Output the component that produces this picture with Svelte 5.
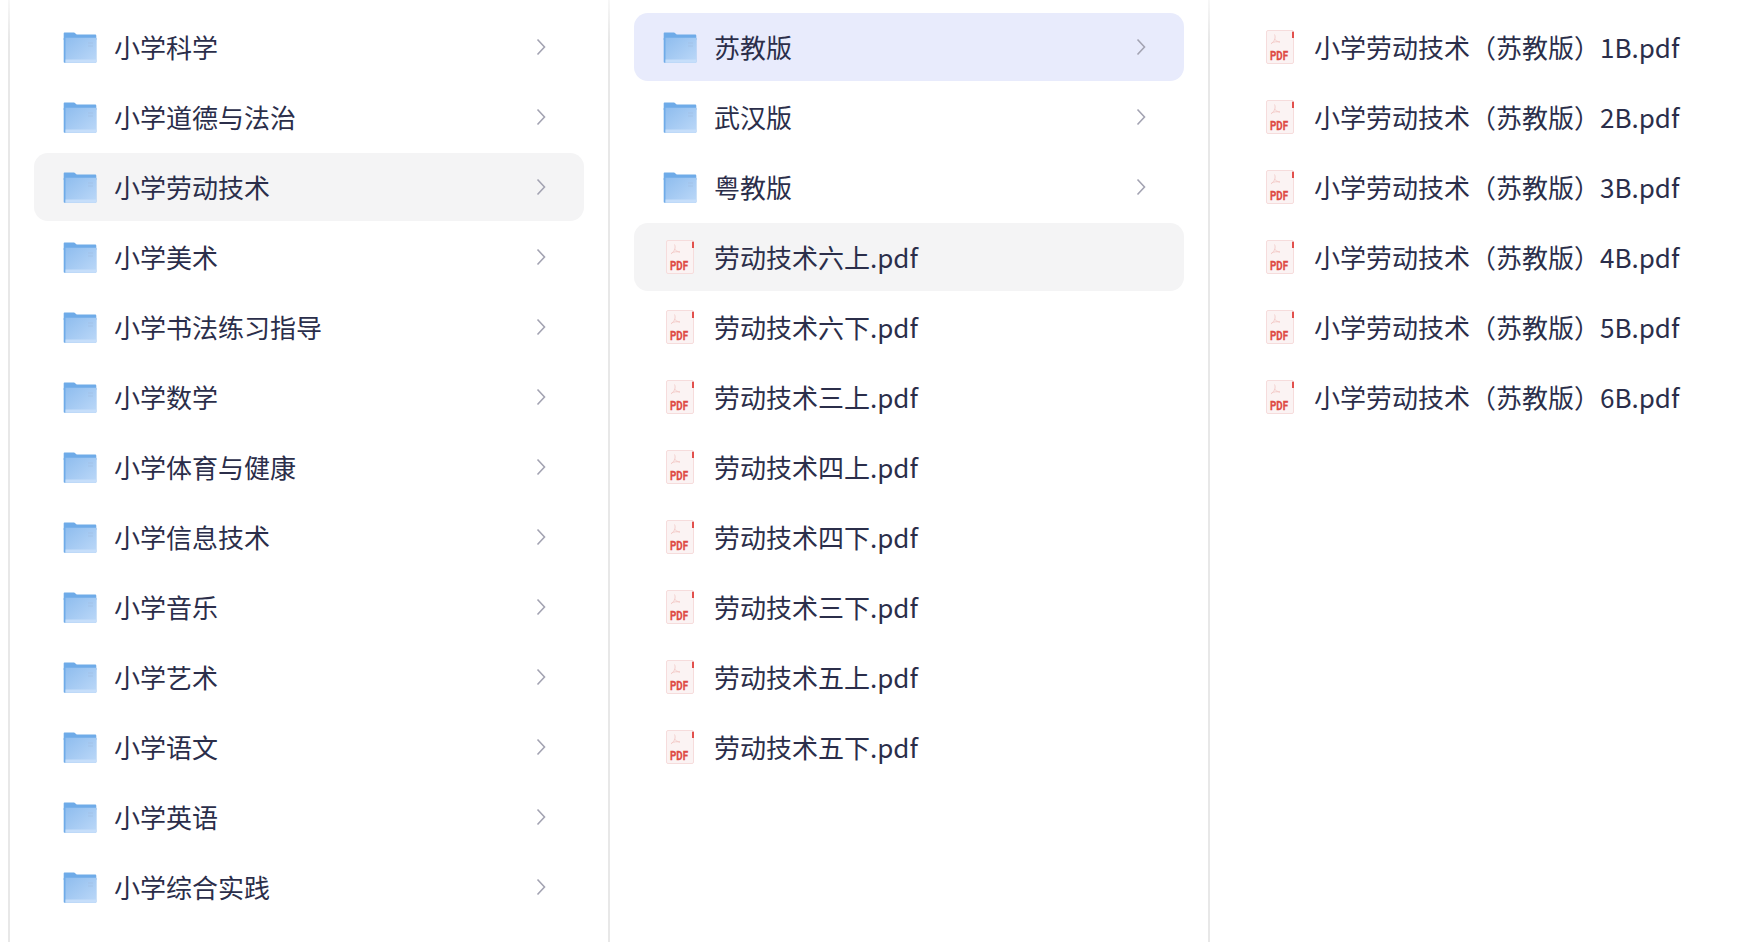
<script lang="ts">
	type Item = { name: string; kind: 'folder' | 'pdf'; state?: 'hover' | 'active' };

	const subjects = [
		'小学科学',
		'小学道德与法治',
		'小学劳动技术',
		'小学美术',
		'小学书法练习指导',
		'小学数学',
		'小学体育与健康',
		'小学信息技术',
		'小学音乐',
		'小学艺术',
		'小学语文',
		'小学英语',
		'小学综合实践'
	];
	const versions = ['苏教版', '武汉版', '粤教版'];
	const books = ['六上', '六下', '三上', '四上', '四下', '三下', '五上', '五下'];

	const columns: Item[][] = [
		subjects.map((name, i) => ({
			name,
			kind: 'folder' as const,
			state: i === 2 ? ('hover' as const) : undefined
		})),
		[
			...versions.map((name, i) => ({
				name,
				kind: 'folder' as const,
				state: i === 0 ? ('active' as const) : undefined
			})),
			...books.map((b, i) => ({
				name: `劳动技术${b}.pdf`,
				kind: 'pdf' as const,
				state: i === 0 ? ('hover' as const) : undefined
			}))
		],
		[1, 2, 3, 4, 5, 6].map((n) => ({
			name: `小学劳动技术（苏教版）${n}B.pdf`,
			kind: 'pdf' as const
		}))
	];
</script>

<div class="browser">
	{#each columns as items, c}
		<ul class="column">
			{#each items as item}
				<li class="row {item.state ?? ''}">
					{#if item.kind === 'folder'}
						<svg class="icon" viewBox="0 0 34 34" aria-hidden="true">
							<defs>
								<linearGradient id="folder-{c}-{item.name}" x1="0" y1="0" x2="1" y2="1">
									<stop offset="0" stop-color="#8fbdee" />
									<stop offset="1" stop-color="#bcd8f8" />
								</linearGradient>
							</defs>
							<path d="M.7 3.500c0-.6.4-1 1-1h9.500l2.500 2h18.300c.8 0 1.300.5 1.300 1.300V10H.7z" fill="#6fabe8" />
							<path d="M.7 8h32.600v23.700c0 .6-.4 1-1 1H1.700c-.6 0-1-.4-1-1z" fill="#6fabe8" />
							<path d="M2.500 7.800h30.800v23.900c0 .6-.4 1-1 1H2.500z" fill="url(#folder-{c}-{item.name})" />
							<path d="M2.500 29.500h30.800v2.200c0 .6-.4 1-1 1H2.500z" fill="#c6defa" />
							<path d="M25 13h5M25 16h5" stroke="#a2c0e4" stroke-width="0.8" />
						</svg>
					{:else}
						<svg class="icon" viewBox="0 0 34 34" aria-hidden="true">
							<rect x="3.500" y="0.500" width="27" height="33" rx="1.500" fill="#fbf3f3" stroke="#f6dcdc" stroke-width="1" />
							<rect x="29" y="1.700" width="2" height="6.300" fill="#e2504c" />
							<path d="M11.500 4.500c1.300 3 .6 6-3.500 9.500M11.500 9c1 1.500 2.800 2.700 5.500 3M8.500 13c2.500-1.300 5-1.500 8.500-1" fill="none" stroke="#f3c9c7" stroke-width="0.9" />
							<text class="pdf-mark" x="7" y="29.500" textLength="18" lengthAdjust="spacingAndGlyphs">PDF</text>
						</svg>
					{/if}
					<span class="label">{item.name}</span>
					{#if item.kind === 'folder'}
						<svg class="chevron" viewBox="0 0 10 18" aria-hidden="true">
							<path d="M1.500 1.500 8.500 9l-7 7.500" fill="none" stroke="#a3a3b2" stroke-width="1.600" />
						</svg>
					{/if}
				</li>
			{/each}
		</ul>
	{/each}
</div>

<style>
	:global(body) {
		background: #fff;
		overflow: hidden;
	}

	.browser {
		display: flex;
		height: 942px;
		margin-left: 8px;
		border-left: 2px solid;
		border-image: linear-gradient(#f8f8f8, #e8e8e8 40px) 1;
		font-family: 'Noto Sans CJK SC', 'Noto Sans', sans-serif;
	}

	.column {
		flex: 0 0 600px;
		box-sizing: border-box;
		margin: 0;
		padding: 13px 24px 0;
		list-style: none;
		border-right: 2px solid;
		border-image: linear-gradient(#f8f8f8, #e8e8e8 40px) 1;
		display: flex;
		flex-direction: column;
		gap: 2px;
	}

	.column:last-child {
		border-right: none;
	}

	.row {
		display: flex;
		align-items: center;
		height: 68px;
		flex: none;
		padding: 0 38px 0 29px;
		border-radius: 14px;
		font-size: 26px;
		color: #2b2e4a;
	}

	.row.hover {
		background: #f4f4f5;
	}

	.row.active {
		background: #e8ebfc;
	}

	.icon {
		width: 34px;
		height: 34px;
		flex: none;
		margin-right: 17px;
	}

	.label {
		flex: 1;
		white-space: nowrap;
		padding-bottom: 2px;
	}

	.chevron {
		width: 10px;
		height: 18px;
		flex: none;
	}

	.pdf-mark {
		font-family: 'Roboto', sans-serif;
		font-size: 13px;
		font-weight: 700;
		fill: #de4a45;
		stroke: #de4a45;
		stroke-width: 0.3;
	}
</style>
